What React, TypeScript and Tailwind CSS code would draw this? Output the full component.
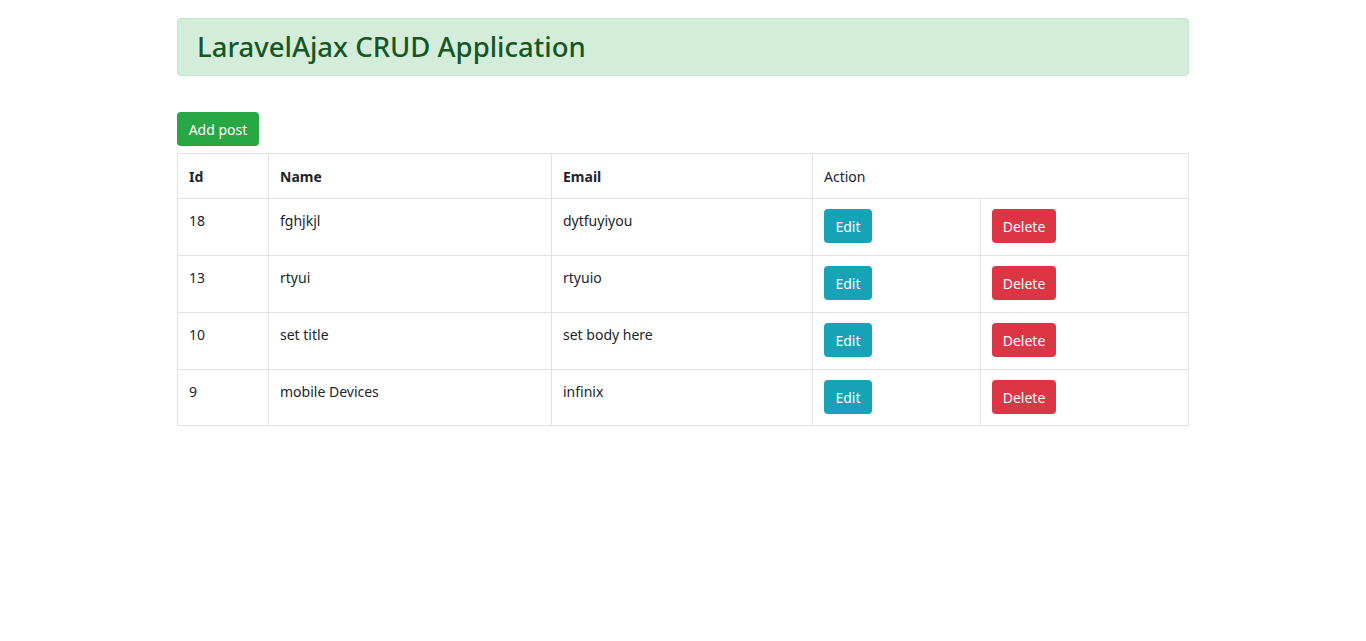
import React from 'react';

const posts = [
  { id: 18, name: 'fghjkjl', email: 'dytfuyiyou' },
  { id: 13, name: 'rtyui', email: 'rtyuio' },
  { id: 10, name: 'set title', email: 'set body here' },
  { id: 9, name: 'mobile Devices', email: 'infinix' },
];

export default function App() {
  return (
    <div
      className="min-h-screen bg-white text-[#212529] text-[14px]"
      style={{ fontFamily: '"Noto Sans", "Open Sans", sans-serif' }}
    >
      <div className="w-[1012px] mx-auto pt-[18px]">
        <div className="bg-[#d4edda] border border-[#c3e6cb] rounded-[4px] px-[19px] py-[11px]">
          <h2 className="text-[#155724] text-[27.5px] leading-[34px] font-medium">
            LaravelAjax CRUD Application
          </h2>
        </div>

        <button className="mt-[36px] h-[34px] w-[82px] bg-[#28a745] text-white rounded-[4px] text-[14px] leading-[33px]">
          Add post
        </button>

        <table className="mt-[7px] w-[1012px] border-collapse border border-[#dee2e6]">
          <thead>
            <tr className="h-[45px]">
              <th className="w-[91px] border border-[#dee2e6] px-[11px] text-left font-bold">Id</th>
              <th className="w-[283px] border border-[#dee2e6] px-[11px] text-left font-bold">Name</th>
              <th className="w-[261px] border border-[#dee2e6] px-[11px] text-left font-bold">Email</th>
              <td colSpan={2} className="border border-[#dee2e6] px-[11px]">Action</td>
            </tr>
          </thead>
          <tbody>
            {posts.map((p, i) => (
              <tr key={p.id} className={i === posts.length - 1 ? 'h-[56px]' : 'h-[57px]'}>
                <td className="border border-[#dee2e6] px-[11px] pt-[11px] align-top">{p.id}</td>
                <td className="border border-[#dee2e6] px-[11px] pt-[11px] align-top">{p.name}</td>
                <td className="border border-[#dee2e6] px-[11px] pt-[11px] align-top">{p.email}</td>
                <td className="w-[168px] border border-[#dee2e6] px-[11px] pt-[10px] align-top">
                  <button className="h-[34px] w-[48px] bg-[#17a2b8] text-white rounded-[4px] leading-[33px]">Edit</button>
                </td>
                <td className="border border-[#dee2e6] px-[11px] pt-[10px] align-top">
                  <button className="h-[34px] w-[64px] bg-[#dc3545] text-white rounded-[4px] leading-[33px]">Delete</button>
                </td>
              </tr>
            ))}
          </tbody>
        </table>
      </div>
    </div>
  );
}
